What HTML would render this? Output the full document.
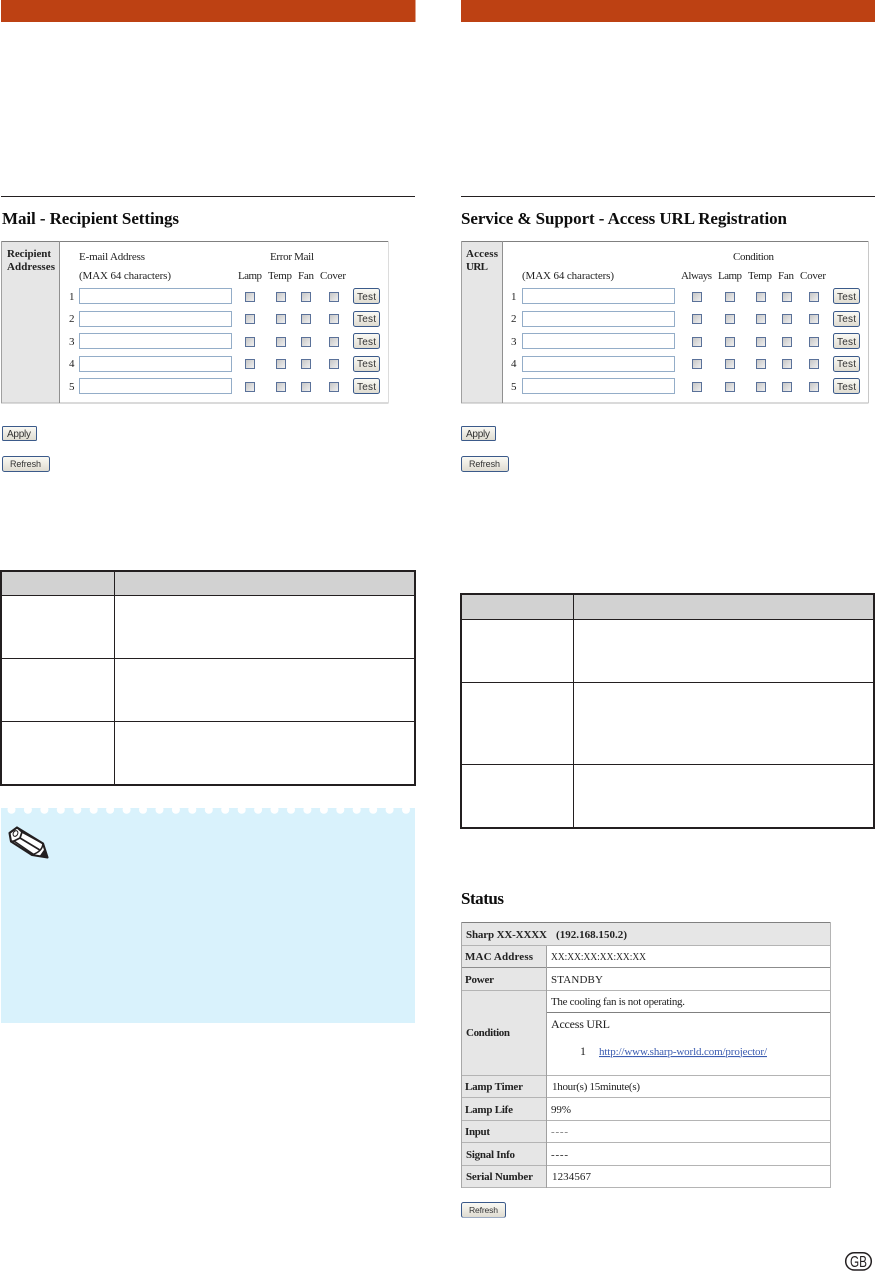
<!DOCTYPE html>
<html lang="en"><head><meta charset="utf-8"><title>Mail and Service Settings</title>
<style>
html,body{margin:0;padding:0;background:#fff;width:875px;height:1271px;overflow:hidden}
svg{display:block}
text{font-family:"Liberation Serif",serif;font-size:11px;fill:#222}
.b{font-weight:bold;font-size:11px}
.t{font-size:17px;font-weight:bold;fill:#111}
.u{font-family:"Liberation Sans",sans-serif;font-size:10px;fill:#333}
.r{font-family:"Liberation Sans",sans-serif;font-size:9px;fill:#333}
.c{shape-rendering:crispEdges}
</style></head><body>
<svg width="875" height="1271" viewBox="0 0 875 1271" xmlns="http://www.w3.org/2000/svg">
<defs>
<linearGradient id="cb" x1="0" y1="0" x2="1" y2="1"><stop offset="0" stop-color="#c4c4c4"/><stop offset="1" stop-color="#f2f2f2"/></linearGradient>
<linearGradient id="bt" x1="0" y1="0" x2="0" y2="1"><stop offset="0" stop-color="#fbfaf5"/><stop offset="1" stop-color="#dedbd0"/></linearGradient>
<filter id="sf" x="0" y="0" width="100%" height="100%"><feGaussianBlur stdDeviation="0.28"/></filter>
<rect id="ck" x="0.5" y="0.5" width="9" height="9" fill="url(#cb)" stroke="#5a7199"/>
<rect id="in" x="0.5" y="0.5" width="152" height="15" fill="#fff" stroke="#94adc8"/>
<rect id="tb" x="0.5" y="0.5" width="26" height="15" rx="2" fill="url(#bt)" stroke="#3a5a8a"/>
</defs>

<!-- orange bars and rules -->
<g class="c">
<rect x="1" y="0" width="414.5" height="22" fill="#bd4113"/>
<rect x="461" y="0" width="414" height="22" fill="#bd4113"/>
<rect x="1" y="196" width="414" height="1" fill="#231f20"/>
<rect x="461" y="196" width="414" height="1" fill="#231f20"/>
</g>

<g filter="url(#sf)">
<text class="t" x="2" y="224" textLength="177">Mail - Recipient Settings</text>
<text class="t" x="461" y="224" textLength="326">Service &amp; Support - Access URL Registration</text>
<text class="t" x="461" y="904" textLength="43">Status</text>

<!-- left form table -->
<g class="c">
<rect x="1" y="241" width="387.5" height="162" fill="#fff"/>
<rect x="1" y="241" width="58" height="162" fill="#e6e6e6"/>
<rect x="1" y="241" width="387.5" height="1" fill="#808080"/>
<rect x="1" y="402.5" width="387.5" height="1" fill="#b4b4b4"/>
<rect x="1" y="241" width="1" height="162" fill="#a0a0a0"/>
<rect x="59" y="241" width="1" height="162" fill="#909090"/>
<rect x="388" y="241" width="1" height="162" fill="#dcdcdc"/>
</g>
<text class="b" x="7" y="257" textLength="44">Recipient</text>
<text class="b" x="7" y="270" textLength="48">Addresses</text>
<text x="79" y="260" textLength="66">E-mail Address</text>
<text x="270" y="260" textLength="44">Error Mail</text>
<text x="79" y="279" textLength="92">(MAX 64 characters)</text>
<text x="238" y="279" textLength="24">Lamp</text>
<text x="268" y="279" textLength="24">Temp</text>
<text x="298" y="279" textLength="16">Fan</text>
<text x="320" y="279" textLength="26">Cover</text>
<text x="69" y="300">1</text><text x="69" y="322">2</text><text x="69" y="345">3</text><text x="69" y="367">4</text><text x="69" y="390">5</text>
<use href="#in" x="79" y="288"/><use href="#in" x="79" y="311"/><use href="#in" x="79" y="333"/><use href="#in" x="79" y="356"/><use href="#in" x="79" y="378"/>
<use href="#ck" x="245" y="292"/><use href="#ck" x="276" y="292"/><use href="#ck" x="301" y="292"/><use href="#ck" x="329" y="292"/>
<use href="#ck" x="245" y="314"/><use href="#ck" x="276" y="314"/><use href="#ck" x="301" y="314"/><use href="#ck" x="329" y="314"/>
<use href="#ck" x="245" y="337"/><use href="#ck" x="276" y="337"/><use href="#ck" x="301" y="337"/><use href="#ck" x="329" y="337"/>
<use href="#ck" x="245" y="359"/><use href="#ck" x="276" y="359"/><use href="#ck" x="301" y="359"/><use href="#ck" x="329" y="359"/>
<use href="#ck" x="245" y="382"/><use href="#ck" x="276" y="382"/><use href="#ck" x="301" y="382"/><use href="#ck" x="329" y="382"/>
<use href="#tb" x="353" y="288"/><use href="#tb" x="353" y="311"/><use href="#tb" x="353" y="333"/><use href="#tb" x="353" y="356"/><use href="#tb" x="353" y="378"/>
<text class="u" x="357" y="300" textLength="19">Test</text><text class="u" x="357" y="322" textLength="19">Test</text><text class="u" x="357" y="345" textLength="19">Test</text><text class="u" x="357" y="367" textLength="19">Test</text><text class="u" x="357" y="390" textLength="19">Test</text>
<rect x="2.5" y="426.5" width="34" height="14" rx="1" fill="url(#bt)" stroke="#3a5a8a"/>
<text class="u" x="7" y="437" textLength="24">Apply</text>
<rect x="2.5" y="456.5" width="47" height="15" rx="2" fill="url(#bt)" stroke="#3a5a8a"/>
<text class="r" x="10" y="467" textLength="31">Refresh</text>

<!-- right form table -->
<g class="c">
<rect x="461" y="241" width="407.5" height="162" fill="#fff"/>
<rect x="461" y="241" width="41" height="162" fill="#e6e6e6"/>
<rect x="461" y="241" width="407.5" height="1" fill="#808080"/>
<rect x="461" y="402.5" width="407.5" height="1" fill="#b4b4b4"/>
<rect x="461" y="241" width="1" height="162" fill="#a0a0a0"/>
<rect x="502" y="241" width="1" height="162" fill="#909090"/>
<rect x="868" y="241" width="1" height="162" fill="#c8c8c8"/>
</g>
<text class="b" x="466" y="257" textLength="32">Access</text>
<text class="b" x="466" y="270" textLength="22">URL</text>
<text x="733" y="260" textLength="41">Condition</text>
<text x="522" y="279" textLength="92">(MAX 64 characters)</text>
<text x="681" y="279" textLength="31">Always</text>
<text x="718" y="279" textLength="24">Lamp</text>
<text x="748" y="279" textLength="24">Temp</text>
<text x="778" y="279" textLength="16">Fan</text>
<text x="800" y="279" textLength="26">Cover</text>
<text x="511" y="300">1</text><text x="511" y="322">2</text><text x="511" y="345">3</text><text x="511" y="367">4</text><text x="511" y="390">5</text>
<use href="#in" x="522" y="288"/><use href="#in" x="522" y="311"/><use href="#in" x="522" y="333"/><use href="#in" x="522" y="356"/><use href="#in" x="522" y="378"/>
<use href="#ck" x="692" y="292"/><use href="#ck" x="725" y="292"/><use href="#ck" x="756" y="292"/><use href="#ck" x="782" y="292"/><use href="#ck" x="809" y="292"/>
<use href="#ck" x="692" y="314"/><use href="#ck" x="725" y="314"/><use href="#ck" x="756" y="314"/><use href="#ck" x="782" y="314"/><use href="#ck" x="809" y="314"/>
<use href="#ck" x="692" y="337"/><use href="#ck" x="725" y="337"/><use href="#ck" x="756" y="337"/><use href="#ck" x="782" y="337"/><use href="#ck" x="809" y="337"/>
<use href="#ck" x="692" y="359"/><use href="#ck" x="725" y="359"/><use href="#ck" x="756" y="359"/><use href="#ck" x="782" y="359"/><use href="#ck" x="809" y="359"/>
<use href="#ck" x="692" y="382"/><use href="#ck" x="725" y="382"/><use href="#ck" x="756" y="382"/><use href="#ck" x="782" y="382"/><use href="#ck" x="809" y="382"/>
<use href="#tb" x="833" y="288"/><use href="#tb" x="833" y="311"/><use href="#tb" x="833" y="333"/><use href="#tb" x="833" y="356"/><use href="#tb" x="833" y="378"/>
<text class="u" x="837" y="300" textLength="19">Test</text><text class="u" x="837" y="322" textLength="19">Test</text><text class="u" x="837" y="345" textLength="19">Test</text><text class="u" x="837" y="367" textLength="19">Test</text><text class="u" x="837" y="390" textLength="19">Test</text>
<rect x="461.5" y="426.5" width="34" height="14" rx="1" fill="url(#bt)" stroke="#3a5a8a"/>
<text class="u" x="466" y="437" textLength="24">Apply</text>
<rect x="461.5" y="456.5" width="47" height="15" rx="2" fill="url(#bt)" stroke="#3a5a8a"/>
<text class="r" x="469" y="467" textLength="31">Refresh</text>

<!-- status table -->
<g class="c">
<rect x="461" y="922" width="369" height="266" fill="#fff"/>
<rect x="461" y="922" width="369" height="24" fill="#e6e6e6"/>
<rect x="461" y="946" width="85" height="242" fill="#e6e6e6"/>
<rect x="461" y="922" width="370" height="1" fill="#808080"/>
<rect x="461" y="945" width="370" height="1" fill="#b4b4b4"/>
<rect x="461" y="967" width="370" height="1" fill="#8c8c8c"/>
<rect x="461" y="990" width="370" height="1" fill="#b4b4b4"/>
<rect x="546" y="1012" width="285" height="1" fill="#808080"/>
<rect x="461" y="1075" width="370" height="1" fill="#b4b4b4"/>
<rect x="461" y="1097" width="370" height="1" fill="#b4b4b4"/>
<rect x="461" y="1120" width="370" height="1" fill="#b4b4b4"/>
<rect x="461" y="1142" width="370" height="1" fill="#b4b4b4"/>
<rect x="461" y="1165" width="370" height="1" fill="#b4b4b4"/>
<rect x="461" y="1187" width="370" height="1" fill="#b4b4b4"/>
<rect x="461" y="922" width="1" height="266" fill="#a8a8a8"/>
<rect x="830" y="922" width="1" height="266" fill="#b4b4b4"/>
<rect x="546" y="946" width="1" height="242" fill="#a0a0a0"/>
</g>
<text class="b" x="466" y="938" textLength="81">Sharp XX-XXXX</text>
<text class="b" x="556" y="938" textLength="71">(192.168.150.2)</text>
<text class="b" x="465" y="960" textLength="68">MAC Address</text>
<text class="b" x="465" y="983" textLength="29">Power</text>
<text class="b" x="466" y="1036" textLength="44">Condition</text>
<text class="b" x="465" y="1090" textLength="58">Lamp Timer</text>
<text class="b" x="465" y="1113" textLength="48">Lamp Life</text>
<text class="b" x="465" y="1135" textLength="25">Input</text>
<text class="b" x="466" y="1158" textLength="49">Signal Info</text>
<text class="b" x="466" y="1180" textLength="67">Serial Number</text>
<text x="551" y="960" textLength="95" lengthAdjust="spacingAndGlyphs" style="font-size:10.5px">XX:XX:XX:XX:XX:XX</text>
<text x="551" y="983" textLength="52">STANDBY</text>
<text x="551" y="1005" textLength="134">The cooling fan is not operating.</text>
<text x="551" y="1028" textLength="59" style="font-size:12px">Access URL</text>
<text x="580" y="1055" style="font-size:12px">1</text>
<text x="599" y="1055" textLength="168" style="fill:#3a5bb0;text-decoration:underline">http://www.sharp-world.com/projector/</text>
<text x="552" y="1090" textLength="88">1hour(s) 15minute(s)</text>
<text x="551" y="1113" textLength="20">99%</text>
<text x="551" y="1135" textLength="17" style="fill:#777">----</text>
<text x="551" y="1158" textLength="17">----</text>
<text x="552" y="1180" textLength="39">1234567</text>
<rect x="461.5" y="1202.5" width="44" height="15" rx="2" fill="url(#bt)" stroke="#3a5a8a"/>
<text class="r" x="469" y="1213" textLength="29" style="font-size:8.6px">Refresh</text>
</g>

<!-- left lower table -->
<g class="c">
<rect x="1" y="570" width="414" height="25" fill="#d2d2d2"/>
<rect x="1" y="570" width="415" height="2" fill="#231f20"/>
<rect x="0" y="784" width="416" height="2" fill="#231f20"/>
<rect x="0" y="570" width="2" height="216" fill="#231f20"/>
<rect x="414" y="570" width="2" height="216" fill="#231f20"/>
<rect x="1" y="595" width="414" height="1" fill="#231f20"/>
<rect x="1" y="658" width="414" height="1" fill="#231f20"/>
<rect x="1" y="721" width="414" height="1" fill="#231f20"/>
<rect x="114" y="570" width="1" height="215" fill="#231f20"/>
</g>

<!-- right lower table -->
<g class="c">
<rect x="461" y="594" width="413" height="25" fill="#d2d2d2"/>
<rect x="460" y="593" width="415" height="2" fill="#231f20"/>
<rect x="460" y="827" width="415" height="2" fill="#231f20"/>
<rect x="460" y="593" width="2" height="236" fill="#231f20"/>
<rect x="873" y="593" width="2" height="236" fill="#231f20"/>
<rect x="461" y="619" width="413" height="1" fill="#231f20"/>
<rect x="461" y="682" width="413" height="1" fill="#231f20"/>
<rect x="461" y="764" width="413" height="1" fill="#231f20"/>
<rect x="573" y="594" width="1" height="234" fill="#231f20"/>
</g>

<!-- note box -->
<rect class="c" x="1" y="808" width="414" height="215" fill="#d9f2fc"/>
<g fill="#fff">
<circle cx="11.5" cy="809.8" r="4"/><circle cx="27.9" cy="809.8" r="4"/><circle cx="44.4" cy="809.8" r="4"/><circle cx="60.8" cy="809.8" r="4"/><circle cx="77.3" cy="809.8" r="4"/><circle cx="93.7" cy="809.8" r="4"/><circle cx="110.1" cy="809.8" r="4"/><circle cx="126.6" cy="809.8" r="4"/><circle cx="143" cy="809.8" r="4"/><circle cx="159.5" cy="809.8" r="4"/><circle cx="175.9" cy="809.8" r="4"/><circle cx="192.3" cy="809.8" r="4"/><circle cx="208.8" cy="809.8" r="4"/><circle cx="225.2" cy="809.8" r="4"/><circle cx="241.7" cy="809.8" r="4"/><circle cx="258.1" cy="809.8" r="4"/><circle cx="274.5" cy="809.8" r="4"/><circle cx="291" cy="809.8" r="4"/><circle cx="307.4" cy="809.8" r="4"/><circle cx="323.9" cy="809.8" r="4"/><circle cx="340.3" cy="809.8" r="4"/><circle cx="356.7" cy="809.8" r="4"/><circle cx="373.2" cy="809.8" r="4"/><circle cx="389.6" cy="809.8" r="4"/><circle cx="406" cy="809.8" r="4"/>
</g>
<!-- pencil icon -->
<g stroke="#231f20" stroke-linejoin="round" stroke-linecap="round" fill="none">
<path d="M17 827.5 L43 843.5 L47.5 857.5 L32 855 L11 841.5 L9.5 833 Z" fill="#fff" stroke-width="2.1"/>
<path d="M17 827.5 L22 832 L20 838 L14 841 L11 841.5" stroke-width="1.8"/>
<path d="M22 832 L43 843.5" stroke-width="1.7"/>
<path d="M20 838 L39 849.5" stroke-width="1.7"/>
<path d="M14 841 L33 854" stroke-width="1.5"/>
<path d="M43 843.5 Q42.5 851 33 854.5" stroke-width="1.6"/>
<ellipse cx="15.5" cy="833.5" rx="2.2" ry="3" transform="rotate(30 15.5 833.5)" stroke-width="1"/>
<path d="M44 850.5 L47.5 857.5 L40 856.2 Z" fill="#231f20" stroke-width="0.9"/>
</g>
<!-- GB mark -->
<rect x="845.7" y="1252.7" width="25.6" height="17.3" rx="8.6" fill="#fff" stroke="#231f20" stroke-width="1.5"/>
<text x="850" y="1267" textLength="17" lengthAdjust="spacingAndGlyphs" style="font-family:'Liberation Sans',sans-serif;font-size:16px;fill:#231f20">GB</text>
</svg>
</body></html>
